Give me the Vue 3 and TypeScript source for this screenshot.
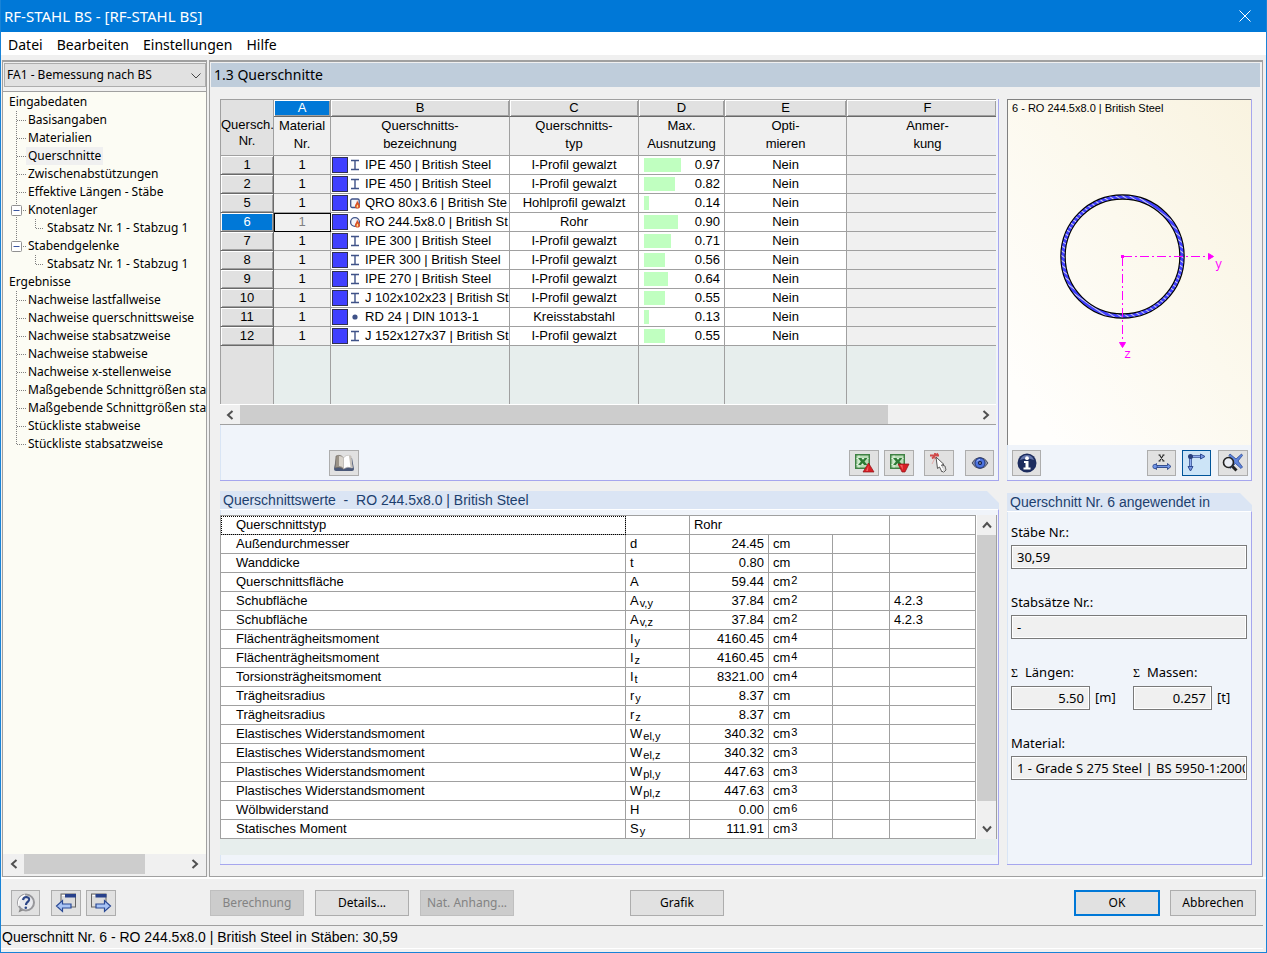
<script setup lang="ts">
import { ref } from 'vue'

interface TreeNode {
  label: string
  depth: 0 | 1 | 2
  box?: boolean
  last?: boolean
  trunk?: boolean
}

interface Section {
  nr: number
  name: string
  shape: 'i' | 'dot' | 'square' | 'ring'
  type: string
  ratio: number
}

interface Property {
  label: string
  symbol: string
  sub?: string
  value: string
  unit: string
  power?: string
  note?: string
}

const menus = ['Datei', 'Bearbeiten', 'Einstellungen', 'Hilfe']

const tree: TreeNode[] = [
  { label: 'Eingabedaten', depth: 0 },
  { label: 'Basisangaben', depth: 1 },
  { label: 'Materialien', depth: 1 },
  { label: 'Querschnitte', depth: 1 },
  { label: 'Zwischenabstützungen', depth: 1 },
  { label: 'Effektive Längen - Stäbe', depth: 1 },
  { label: 'Knotenlager', depth: 1, box: true },
  { label: 'Stabsatz Nr. 1 - Stabzug 1', depth: 2, trunk: true },
  { label: 'Stabendgelenke', depth: 1, box: true, last: true },
  { label: 'Stabsatz Nr. 1 - Stabzug 1', depth: 2 },
  { label: 'Ergebnisse', depth: 0 },
  { label: 'Nachweise lastfallweise', depth: 1 },
  { label: 'Nachweise querschnittsweise', depth: 1 },
  { label: 'Nachweise stabsatzweise', depth: 1 },
  { label: 'Nachweise stabweise', depth: 1 },
  { label: 'Nachweise x-stellenweise', depth: 1 },
  { label: 'Maßgebende Schnittgrößen sta', depth: 1 },
  { label: 'Maßgebende Schnittgrößen sta', depth: 1 },
  { label: 'Stückliste stabweise', depth: 1 },
  { label: 'Stückliste stabsatzweise', depth: 1, last: true },
]

const columns = [
  { letter: 'A', lines: ['Material', 'Nr.'] },
  { letter: 'B', lines: ['Querschnitts-', 'bezeichnung'] },
  { letter: 'C', lines: ['Querschnitts-', 'typ'] },
  { letter: 'D', lines: ['Max.', 'Ausnutzung'] },
  { letter: 'E', lines: ['Opti-', 'mieren'] },
  { letter: 'F', lines: ['Anmer-', 'kung'] },
]

const sections: Section[] = [
  { nr: 1, name: 'IPE 450 | British Steel', shape: 'i', type: 'I-Profil gewalzt', ratio: 0.97 },
  { nr: 2, name: 'IPE 450 | British Steel', shape: 'i', type: 'I-Profil gewalzt', ratio: 0.82 },
  { nr: 5, name: 'QRO 80x3.6 | British Ste', shape: 'square', type: 'Hohlprofil gewalzt', ratio: 0.14 },
  { nr: 6, name: 'RO 244.5x8.0 | British St', shape: 'ring', type: 'Rohr', ratio: 0.9 },
  { nr: 7, name: 'IPE 300 | British Steel', shape: 'i', type: 'I-Profil gewalzt', ratio: 0.71 },
  { nr: 8, name: 'IPER 300 | British Steel', shape: 'i', type: 'I-Profil gewalzt', ratio: 0.56 },
  { nr: 9, name: 'IPE 270 | British Steel', shape: 'i', type: 'I-Profil gewalzt', ratio: 0.64 },
  { nr: 10, name: 'J 102x102x23 | British St', shape: 'i', type: 'I-Profil gewalzt', ratio: 0.55 },
  { nr: 11, name: 'RD 24 | DIN 1013-1', shape: 'dot', type: 'Kreisstabstahl', ratio: 0.13 },
  { nr: 12, name: 'J 152x127x37 | British St', shape: 'i', type: 'I-Profil gewalzt', ratio: 0.55 },
]

const properties: Property[] = [
  { label: 'Außendurchmesser', symbol: 'd', value: '24.45', unit: 'cm' },
  { label: 'Wanddicke', symbol: 't', value: '0.80', unit: 'cm' },
  { label: 'Querschnittsfläche', symbol: 'A', value: '59.44', unit: 'cm', power: '2' },
  { label: 'Schubfläche', symbol: 'A', sub: 'v,y', value: '37.84', unit: 'cm', power: '2', note: '4.2.3' },
  { label: 'Schubfläche', symbol: 'A', sub: 'v,z', value: '37.84', unit: 'cm', power: '2', note: '4.2.3' },
  { label: 'Flächenträgheitsmoment', symbol: 'I', sub: 'y', value: '4160.45', unit: 'cm', power: '4' },
  { label: 'Flächenträgheitsmoment', symbol: 'I', sub: 'z', value: '4160.45', unit: 'cm', power: '4' },
  { label: 'Torsionsträgheitsmoment', symbol: 'I', sub: 't', value: '8321.00', unit: 'cm', power: '4' },
  { label: 'Trägheitsradius', symbol: 'r', sub: 'y', value: '8.37', unit: 'cm' },
  { label: 'Trägheitsradius', symbol: 'r', sub: 'z', value: '8.37', unit: 'cm' },
  { label: 'Elastisches Widerstandsmoment', symbol: 'W', sub: 'el,y', value: '340.32', unit: 'cm', power: '3' },
  { label: 'Elastisches Widerstandsmoment', symbol: 'W', sub: 'el,z', value: '340.32', unit: 'cm', power: '3' },
  { label: 'Plastisches Widerstandsmoment', symbol: 'W', sub: 'pl,y', value: '447.63', unit: 'cm', power: '3' },
  { label: 'Plastisches Widerstandsmoment', symbol: 'W', sub: 'pl,z', value: '447.63', unit: 'cm', power: '3' },
  { label: 'Wölbwiderstand', symbol: 'H', value: '0.00', unit: 'cm', power: '6' },
  { label: 'Statisches Moment', symbol: 'S', sub: 'y', value: '111.91', unit: 'cm', power: '3' },
]

const activeNode = ref(3)
const activeRow = ref(6)
const showAxes = ref(true)

const barWidth = (ratio: number): string => `${Math.round(ratio * 38)}px`
</script>

<template>
  <div class="window">
    <header class="titlebar">
      <h1>RF-STAHL BS - [RF-STAHL BS]</h1>
      <button type="button" class="close" aria-label="Schließen">
        <svg width="12" height="12" viewBox="0 0 12 12"><path d="M.5.5l11 11M11.5.5l-11 11" stroke="#fff" fill="none" /></svg>
      </button>
    </header>

    <nav class="menubar">
      <button v-for="m in menus" :key="m" type="button">{{ m }}</button>
    </nav>

    <div class="workspace">
      <aside class="sidebar">
        <div class="combo">
          <select aria-label="Bemessungsfall">
            <option>FA1 - Bemessung nach BS</option>
          </select>
          <svg width="10" height="6" viewBox="0 0 10 6"><path d="M.5.5L5 5L9.500.5" stroke="#444" fill="none" /></svg>
        </div>
        <ul class="tree">
          <li v-for="(n, i) in tree" :key="i">
            <svg v-if="n.depth === 1" class="branch" width="24" height="18" viewBox="0 0 24 18">
              <path :d="n.last ? 'M12.500 0V10' : 'M12.500 0V18'" />
              <path d="M13 9.500H22" />
              <g v-if="n.box">
                <rect x="7.500" y="4.500" width="10" height="10" rx="1" class="box" />
                <path d="M9.500 9.500H15.500" class="minus" />
              </g>
            </svg>
            <svg v-else-if="n.depth === 2" class="branch" width="43" height="18" viewBox="0 0 43 18">
              <path v-if="n.trunk" d="M12.500 0V18" />
              <path d="M31.500 0V10" />
              <path d="M32 9.500H40" />
            </svg>
            <a
              href="#"
              :class="{ root: n.depth === 0, active: i === activeNode }"
              @click.prevent="activeNode = i"
            >{{ n.label }}</a>
          </li>
        </ul>
        <div class="hscroll tree-scroll">
          <button type="button" aria-label="Nach links"><svg width="8" height="10" viewBox="0 0 8 10"><path d="M6.500 1L2 5L6.500 9" /></svg></button>
          <div class="track"><div class="thumb"></div></div>
          <button type="button" aria-label="Nach rechts"><svg width="8" height="10" viewBox="0 0 8 10"><path d="M1.500 1L6 5L1.500 9" /></svg></button>
        </div>
      </aside>

      <main class="main">
        <h2 class="page-title">1.3 Querschnitte</h2>
        <div class="content">
          <div class="left-col">
            <section class="card upper">
              <div class="grid-wrap">
                <table class="grid">
                  <colgroup>
                    <col class="c-nr" /><col class="c-a" /><col class="c-b" /><col class="c-c" /><col class="c-d" /><col class="c-e" /><col />
                  </colgroup>
                  <thead>
                    <tr class="letters">
                      <th rowspan="2" class="corner">Quersch.<br />Nr.</th>
                      <th v-for="c in columns" :key="c.letter" :class="{ on: c.letter === 'A' }">{{ c.letter }}</th>
                    </tr>
                    <tr class="labels">
                      <th v-for="c in columns" :key="c.letter">{{ c.lines[0] }}<br />{{ c.lines[1] }}</th>
                    </tr>
                  </thead>
                  <tbody>
                    <tr v-for="s in sections" :key="s.nr" :class="{ selected: s.nr === activeRow }" @click="activeRow = s.nr">
                      <th scope="row">{{ s.nr }}</th>
                      <td class="material">1</td>
                      <td>
                        <div class="name">
                          <span class="swatch"></span>
                          <svg width="12" height="14" viewBox="0 0 12 14">
                            <path v-if="s.shape === 'i'" d="M2 2.500H10M2 11.500H10M6 3V11" fill="none" stroke="#3f5288" stroke-width="1.400" />
                            <circle v-else-if="s.shape === 'dot'" cx="6" cy="7" r="2.600" fill="#3f5288" />
                            <g v-else>
                              <rect v-if="s.shape === 'square'" x="1.700" y="3" width="8.500" height="8.500" rx="1.500" fill="#f4f6fb" stroke="#3f5288" stroke-width="1.300" />
                              <circle v-else cx="6" cy="7" r="4.400" fill="#f4f6fb" stroke="#3f5288" stroke-width="1.300" />
                              <path d="M8 4C9 7 11.500 8 11 11C10.500 13 6.500 13 6 11C5.500 8.500 8 7.500 8 4Z" fill="#d9542b" />
                              <path d="M8.500 8.500C9.500 10 9.500 11.500 8.300 11.700C7 11.500 7.500 10 8.500 8.500Z" fill="#ffe08a" />
                            </g>
                          </svg>
                          <span>{{ s.name }}</span>
                        </div>
                      </td>
                      <td class="mid">{{ s.type }}</td>
                      <td>
                        <div class="ratio">
                          <span class="bar" :style="{ width: barWidth(s.ratio) }"></span>
                          <span>{{ s.ratio.toFixed(2) }}</span>
                        </div>
                      </td>
                      <td class="mid">Nein</td>
                      <td class="remark"></td>
                    </tr>
                    <tr class="filler"><th></th><td v-for="c in columns" :key="c.letter"></td></tr>
                  </tbody>
                </table>
                <div class="hscroll grid-scroll">
                  <button type="button" aria-label="Nach links"><svg width="8" height="10" viewBox="0 0 8 10"><path d="M6.500 1L2 5L6.500 9" /></svg></button>
                  <div class="track"><div class="thumb"></div></div>
                  <button type="button" aria-label="Nach rechts"><svg width="8" height="10" viewBox="0 0 8 10"><path d="M1.500 1L6 5L1.500 9" /></svg></button>
                </div>
              </div>
              <div class="toolbar grid-tools">
                <button type="button" class="icon" aria-label="Bibliothek">
                  <svg width="22" height="20" viewBox="0 0 22 20">
                    <path d="M3 6L1 16Q1 18 3 18H19Q21 18 21 16L19 5Z" fill="#4a5878" />
                    <path d="M3 3Q8 1 10.500 5V16Q7 13 2 15Z" fill="#9b9388" stroke="#6d665f" stroke-width=".6" />
                    <path d="M6 3Q9 3 10.500 5V15Q8.500 13 6 13Z" fill="#d9d4cc" />
                    <path d="M10.500 5Q13 1 18 3L19.500 15Q14 13 10.500 16Z" fill="#fff" stroke="#b9b4ae" stroke-width=".6" />
                    <path d="M16 3Q17 2.500 18 3L19.500 15L17.500 14Z" fill="#c6c1ba" />
                  </svg>
                </button>
                <button type="button" class="icon push" aria-label="Excel-Export">
                  <svg width="22" height="22" viewBox="0 0 22 22">
                    <rect x="2" y="2" width="15" height="15" fill="#3f8244" />
                    <rect x="3.500" y="3.500" width="12" height="12" fill="#b9dcb6" />
                    <path d="M3.500 6.500H15.500M3.500 12.500H15.500M6 3.500V15.500" stroke="#e6f5e4" fill="none" />
                    <path d="M5 6H8.500L10 8L11.500 6H14.500L11.500 9.500L14.500 13H11L9.500 11L8 13H5L8 9.500Z" fill="#2d7b35" />
                    <path d="M15.500 11L21 20H10Z" fill="#d91f26" stroke="#8e1217" stroke-width=".7" />
                    <path d="M15.500 13.500L15 19H13Z" fill="#f06060" />
                  </svg>
                </button>
                <button type="button" class="icon" aria-label="Excel-Import">
                  <svg width="22" height="22" viewBox="0 0 22 22">
                    <rect x="2" y="2" width="15" height="15" fill="#3f8244" />
                    <rect x="3.500" y="3.500" width="12" height="12" fill="#b9dcb6" />
                    <path d="M3.500 6.500H15.500M3.500 12.500H15.500M6 3.500V15.500" stroke="#e6f5e4" fill="none" />
                    <path d="M5 6H8.500L10 8L11.500 6H14.500L11.500 9.500L14.500 13H11L9.500 11L8 13H5L8 9.500Z" fill="#2d7b35" />
                    <path d="M10 12H21L17 20H14Z" fill="#d91f26" stroke="#8e1217" stroke-width=".7" />
                    <path d="M12 13H14.500L15 18Z" fill="#f06060" />
                  </svg>
                </button>
                <button type="button" class="icon pick" aria-label="Auswählen">
                  <svg width="22" height="22" viewBox="0 0 22 22">
                    <path d="M2 3.500H11M7 1V7M4 6.500L10 1.500" stroke="#d04a4a" stroke-width="1.800" fill="none" />
                    <path d="M4 12L8 4" stroke="#e5aaaa" fill="none" />
                    <path d="M8 5L16 12.500L13.500 13L16.500 18L14 20L11.500 15L9.500 16.500Z" fill="#fff" stroke="#555" />
                    <path d="M14 13L17 14L18 18L15.500 20.500" fill="#ddd" stroke="#666" />
                  </svg>
                </button>
                <button type="button" class="icon view" aria-label="Ansicht">
                  <svg width="20" height="20" viewBox="0 0 20 20">
                    <path d="M2 10Q5 4.500 10 4.500T18 10Q15 15.500 10 15.500T2 10Z" fill="#8f95a8" stroke="#4b5064" />
                    <circle cx="10" cy="10" r="5" fill="#4d74e0" stroke="#23397f" />
                    <circle cx="10" cy="10" r="2" fill="#101b45" />
                    <path d="M7 8.500Q8 6.500 10 6.500" stroke="#b6c9ff" fill="none" />
                    <circle cx="10" cy="10" r=".7" fill="#fff" />
                  </svg>
                </button>
              </div>
            </section>

            <section class="lower">
              <h3 class="card-title">Querschnittswerte&nbsp; -&nbsp; RO 244.5x8.0 | British Steel</h3>
              <div class="card props-card">
                <div class="props-wrap">
                  <table class="props">
                    <colgroup>
                      <col /><col class="p-sym" /><col class="p-val" /><col class="p-unit" /><col class="p-x" /><col class="p-note" />
                    </colgroup>
                    <tbody>
                      <tr>
                        <th scope="row" class="focus">Querschnittstyp</th>
                        <td></td>
                        <td colspan="3">Rohr</td>
                        <td></td>
                      </tr>
                      <tr v-for="(p, i) in properties" :key="i">
                        <th scope="row">{{ p.label }}</th>
                        <td>{{ p.symbol }}<sub v-if="p.sub">{{ p.sub }}</sub></td>
                        <td class="num">{{ p.value }}</td>
                        <td>{{ p.unit }}<sup v-if="p.power">{{ p.power }}</sup></td>
                        <td></td>
                        <td>{{ p.note }}</td>
                      </tr>
                    </tbody>
                  </table>
                  <div class="vscroll">
                    <button type="button" aria-label="Nach oben"><svg width="10" height="8" viewBox="0 0 10 8"><path d="M1 6.500L5 2L9 6.500" /></svg></button>
                    <div class="vthumb"></div>
                    <button type="button" class="down" aria-label="Nach unten"><svg width="10" height="8" viewBox="0 0 10 8"><path d="M1 1.500L5 6L9 1.500" /></svg></button>
                  </div>
                </div>
                <div class="props-rest"></div>
              </div>
            </section>
          </div>

          <div class="right-col">
            <section class="card upper">
              <div class="canvas">
                <p>6 - RO 244.5x8.0 | British Steel</p>
                <svg class="drawing" width="242" height="325" viewBox="1008 120 242 325">
                  <defs>
                    <pattern id="hatch" width="4" height="4" patternUnits="userSpaceOnUse" patternTransform="rotate(35)">
                      <rect width="4" height="4" fill="#4040ff" />
                      <rect width="4" height="1" fill="#d0d0ee" />
                    </pattern>
                  </defs>
                  <circle cx="1122.500" cy="256.500" r="59.500" fill="none" stroke="#000" stroke-width="5.500" />
                  <circle cx="1122.500" cy="256.500" r="59.500" fill="none" stroke="url(#hatch)" stroke-width="3.200" />
                  <g v-if="showAxes" stroke="#ff00ff" fill="none">
                    <path d="M1123 256.500H1208" stroke-dasharray="9 3 2 3" />
                    <path d="M1122.500 257V343" stroke-dasharray="9 3 2 3" />
                    <path d="M1208.500 253.500L1213.500 256.500L1208.500 259.500Z" fill="#ff00ff" />
                    <path d="M1119.500 342.500L1122.500 347.500L1125.500 342.500Z" fill="#ff00ff" />
                    <rect x="1121.500" y="255.500" width="2" height="2" fill="#ff00ff" />
                  </g>
                  <g v-if="showAxes" class="axis">
                    <text x="1215" y="268">y</text>
                    <text x="1124" y="358">z</text>
                  </g>
                </svg>
              </div>
              <div class="toolbar view-tools">
                <button type="button" class="icon narrow" aria-label="Info">
                  <svg width="22" height="22" viewBox="0 0 22 22">
                    <circle cx="11" cy="11" r="9.500" fill="#1c2c5e" />
                    <path d="M4 8Q6 3 11 3T18 8Q11 5 4 8Z" fill="#6476ac" />
                    <circle cx="11" cy="6.200" r="1.900" fill="#fff" />
                    <path d="M8 9H12.500V15.500H14.500V17.500H7.500V15.500H9.500V11H8Z" fill="#fff" />
                  </svg>
                </button>
                <button type="button" class="icon narrow push" aria-label="Bemaßung">
                  <svg width="22" height="22" viewBox="0 0 22 22">
                    <path d="M8.500 3L12.500 9M12.500 3L8.500 9M7.500 3H9.500M11.500 3H13.500M7.500 9H9.500M11.500 9H13.500" stroke="#222" stroke-width="1.100" fill="none" />
                    <path d="M2 14.500L5.500 11.500V13.500H16.500V11.500L20 14.500L16.500 17.500V15.500H5.500V17.500Z" fill="#7397e8" stroke="#2a4486" stroke-width=".9" />
                    <circle cx="4" cy="14.500" r="2.200" fill="#6f93e6" stroke="#2a4486" stroke-width=".7" />
                  </svg>
                </button>
                <button type="button" class="icon narrow axes" :class="{ pressed: showAxes }" aria-label="Achsen" @click="showAxes = !showAxes">
                  <svg width="22" height="22" viewBox="0 0 22 22">
                    <path d="M4 4.500H15M4.500 5V16" stroke="#2f4c94" stroke-width="2.600" fill="none" />
                    <path d="M4 4.500H15M4.500 5V16" stroke="#90acef" fill="none" />
                    <path d="M14.500 2L19 4.500L14.500 7Z" fill="#7797e2" stroke="#2f4c94" />
                    <path d="M2 14.500H7L4.500 19Z" fill="#7797e2" stroke="#2f4c94" />
                    <circle cx="4.500" cy="4.500" r="2.500" fill="#283f7d" />
                  </svg>
                </button>
                <button type="button" class="icon zoom" aria-label="Zoom zurücksetzen">
                  <svg width="22" height="22" viewBox="0 0 22 22">
                    <path d="M8 2L14 7L19.500 2L20.500 3.500L16 9L20.500 15L19 16.500L13.500 11.500L8 16.500L11.500 9L7 3.500Z" fill="#5e84dd" stroke="#2b4a95" stroke-width=".8" />
                    <circle cx="6.500" cy="10.500" r="5" fill="#eef2fb" fill-opacity=".75" stroke="#222" stroke-width="1.600" />
                    <path d="M10.500 14.500L14.500 18.500" stroke="#222" stroke-width="3" />
                  </svg>
                </button>
              </div>
            </section>

            <section class="lower">
              <h3 class="card-title">Querschnitt Nr. 6 angewendet in</h3>
              <form class="card usage" @submit.prevent>
                <div class="field">
                  <label for="members">Stäbe Nr.:</label>
                  <input id="members" type="text" value="30,59" readonly />
                </div>
                <div class="field">
                  <label for="sets">Stabsätze Nr.:</label>
                  <input id="sets" type="text" value="-" readonly />
                </div>
                <div class="pair">
                  <div class="field">
                    <label for="lengths"><span class="sigma">Σ</span>Längen:</label>
                    <div class="measure"><input id="lengths" type="text" value="5.50" readonly /><span>[m]</span></div>
                  </div>
                  <div class="field">
                    <label for="masses"><span class="sigma">Σ</span>Massen:</label>
                    <div class="measure"><input id="masses" type="text" value="0.257" readonly /><span>[t]</span></div>
                  </div>
                </div>
                <div class="field">
                  <label for="material">Material:</label>
                  <input id="material" type="text" value="1 - Grade S 275 Steel | BS 5950-1:2000" readonly />
                </div>
              </form>
            </section>
          </div>
        </div>
      </main>
    </div>

    <footer class="actions">
      <div class="nav-icons">
        <button type="button" class="icon narrow help" aria-label="Hilfe">
          <svg width="22" height="22" viewBox="0 0 22 22">
            <path d="M5 16L3.500 20.500L9 18Z" fill="#888" />
            <circle cx="11" cy="10.500" r="8" fill="#e9eaee" stroke="#97979b" stroke-width="2" />
            <path d="M4 14Q2 6 10 3" stroke="#fff" stroke-width="1.500" fill="none" />
            <path d="M8 8Q8.500 5 11.500 5Q14.500 5.500 14 8Q13.500 9.500 12 10.500Q11 11.500 11 13" stroke="#2c4687" stroke-width="2.200" fill="none" />
            <circle cx="10.800" cy="15.800" r="1.300" fill="#2c4687" />
          </svg>
        </button>
        <button type="button" class="icon" aria-label="Vorherige Maske">
          <svg width="22" height="22" viewBox="0 0 22 22">
            <rect x="6" y="2" width="14.500" height="13" fill="#dcdcdc" stroke="#666" />
            <rect x="10" y="2" width="11" height="3.500" fill="#27408b" />
            <path d="M7 3.500H10" stroke="#fff" />
            <path d="M1.500 14L7.500 8.500V12H16V16H7.500V19.500Z" fill="#a9c4f5" stroke="#2b4a95" stroke-width="1.200" />
          </svg>
        </button>
        <button type="button" class="icon" aria-label="Nächste Maske">
          <svg width="22" height="22" viewBox="0 0 22 22">
            <rect x="1.500" y="2" width="14.500" height="13" fill="#dcdcdc" stroke="#666" />
            <rect x="5.500" y="2" width="11" height="3.500" fill="#27408b" />
            <path d="M2.500 3.500H5" stroke="#fff" />
            <path d="M20.500 14L14.500 8.500V12H6V16H14.500V19.500Z" fill="#a9c4f5" stroke="#2b4a95" stroke-width="1.200" />
          </svg>
        </button>
      </div>
      <div class="commands">
        <button type="button" class="push-btn" disabled>Berechnung</button>
        <button type="button" class="push-btn">Details...</button>
        <button type="button" class="push-btn" disabled>Nat. Anhang...</button>
      </div>
      <button type="button" class="push-btn graphic">Grafik</button>
      <div class="confirm">
        <button type="button" class="push-btn primary">OK</button>
        <button type="button" class="push-btn">Abbrechen</button>
      </div>
    </footer>

    <div class="status" role="status">Querschnitt Nr. 6 - RO 244.5x8.0 | British Steel in Stäben: 30,59</div>
  </div>
</template>

<style>
body {
  margin: 0;
}
</style>

<style scoped>
.window,
.window * {
  box-sizing: border-box;
}

.window {
  display: flex;
  flex-direction: column;
  min-height: 100vh;
  background: #f0f0f0;
  border: 1px solid #1883d7;
  border-top: 0;
  color: #000;
  font: 12px/16px "Noto Sans", "Open Sans", sans-serif;
}

button,
select,
input {
  margin: 0;
  color: inherit;
  font: inherit;
}

svg {
  display: block;
  flex: none;
}

h1,
h2,
h3,
p,
ul {
  margin: 0;
  padding: 0;
  font-weight: 400;
}

.titlebar {
  display: flex;
  align-items: center;
  justify-content: space-between;
  height: 32px;
  padding: 0 15px 0 3px;
  background: #0078d7;
  color: #fff;
}

.titlebar h1 {
  font-size: 15px;
  line-height: 32px;
}

.close {
  display: flex;
  padding: 0;
  border: 0;
  background: none;
}

.menubar {
  display: flex;
  gap: 14px;
  height: 23px;
  padding: 0 7px;
  margin-bottom: 5px;
  background: #fff;
}

.menubar button {
  padding: 0;
  border: 0;
  background: none;
  font-size: 14px;
  line-height: 26px;
}

.workspace {
  display: flex;
  flex: 1;
  gap: 2px;
  padding: 0 3px 0 1px;
  border-bottom: 2px solid #fff;
}

.sidebar {
  display: flex;
  flex-direction: column;
  flex: none;
  width: 205px;
  border: 1px solid #a0a0a0;
  border-top-width: 2px;
  background: #fcfcf4;
}

.combo {
  position: relative;
  padding: 1px 0 4px 1px;
  background: #f0f0f0;
  border-bottom: 1px solid #a0a0a0;
}

.combo select {
  display: block;
  width: 100%;
  height: 24px;
  padding: 0 20px 0 2px;
  border: 1px solid #adadad;
  border-radius: 0;
  background: #e1e1e1;
  appearance: none;
}

.combo svg {
  position: absolute;
  top: 11px;
  right: 5px;
  pointer-events: none;
}

.tree {
  flex: 1;
  padding: 1px 0 0 1px;
  overflow: hidden;
  list-style: none;
}

.tree li {
  display: flex;
  height: 18px;
  white-space: nowrap;
}

.branch path {
  fill: none;
  stroke: #808080;
  stroke-dasharray: 1 1;
}

.branch .box {
  fill: #fff;
  stroke: #919191;
}

.branch .minus {
  stroke: #3a55a0;
  stroke-dasharray: none;
}

.tree a {
  margin-left: -2px;
  padding: 0 0 0 2px;
  color: inherit;
  line-height: 18px;
  text-decoration: none;
}

.tree a.root {
  margin-left: 3px;
}

.tree a.active {
  padding-right: 2px;
  background: #f0f0f0;
}

.hscroll {
  display: flex;
  height: 19px;
  background: #f0f0f0;
}

.hscroll button,
.vscroll button {
  display: flex;
  align-items: center;
  justify-content: center;
  flex: none;
  width: 20px;
  padding: 0;
  border: 0;
  background: none;
}

.hscroll path,
.vscroll path {
  fill: none;
  stroke: #505050;
  stroke-width: 2;
}

.track {
  display: flex;
  flex: 1;
}

.thumb {
  background: #cdcdcd;
}

.tree-scroll {
  height: 22px;
  padding: 0 1px 2px;
}

.tree-scroll .thumb {
  width: 75%;
}

.grid-scroll {
  height: 21px;
  border-top: 1px solid #fff;
  border-bottom: 1px solid #a0a0a0;
}

.grid-scroll .thumb {
  width: 88%;
}

.main {
  display: flex;
  flex-direction: column;
  flex: 1;
  min-width: 0;
  border: 1px solid #a0a0a0;
  border-top-width: 2px;
}

.page-title {
  margin: 1px 2px 0 1px;
  padding-left: 3px;
  background: #bfcddb;
  font-size: 14px;
  line-height: 24px;
}

.content {
  display: flex;
  flex: 1;
  gap: 8px;
  padding: 12px 10px 11px;
}

.left-col {
  display: flex;
  flex-direction: column;
  flex: 1;
  gap: 10px;
  min-width: 0;
  font-family: "Liberation Sans", Arial, sans-serif;
}

.right-col {
  display: flex;
  flex-direction: column;
  flex: none;
  gap: 12px;
  width: 245px;
}

.card {
  background: #f0f4fa;
  border-right: 1px solid #a6a6ee;
  border-bottom: 1px solid #a6a6ee;
  box-shadow: inset 1px 0 #d9e5f5;
}

.upper {
  height: 382px;
}

.lower {
  display: flex;
  flex-direction: column;
  flex: 1;
}

.card-title {
  height: 18px;
  padding-left: 3px;
  background: #dbe5f4;
  clip-path: polygon(0 0, calc(100% - 12px) 0, 100% 12px, 100% 100%, 0 100%);
  color: #1d3f6e;
  font: 14px/18px "Liberation Sans", Arial, sans-serif;
}

.grid-wrap {
  margin-right: 2px;
}

.grid,
.props {
  width: 100%;
  border-collapse: separate;
  border-spacing: 0;
  table-layout: fixed;
  font-size: 13px;
  line-height: 18px;
}

.grid {
  border-top: 1px solid #a0a0a0;
}

.c-nr { width: 54px; }
.c-a { width: 57px; }
.c-b { width: 179px; }
.c-c { width: 129px; }
.c-d { width: 86px; }
.c-e { width: 122px; }

.grid th,
.grid td {
  height: 19px;
  padding: 0;
  border-right: 1px solid #a0a0a0;
  border-bottom: 1px solid #a0a0a0;
  background: #fff;
  font-weight: 400;
  white-space: nowrap;
}

.grid tr > :last-child {
  border-right: 0;
}

.grid thead tr > :last-child {
  padding-left: 12px;
}

.grid .letters th {
  height: 17px;
  background: #e1e1e1;
  border-bottom-color: #696969;
  box-shadow: inset 1px 1px #fff, inset -1px -1px #a0a0a0;
  line-height: 16px;
}

.grid .letters .on {
  background: #0078d7;
  color: #fff;
}

.grid .letters .corner {
  border-left: 1px solid #a0a0a0;
  border-bottom-color: #a0a0a0;
  box-shadow: none;
  padding-top: 10px;
}

.grid .labels th {
  height: 39px;
  background: #f0f0f0;
  line-height: 18px;
  vertical-align: top;
}

.grid tbody th {
  border-left: 1px solid #a0a0a0;
  border-right-color: #696969;
  border-bottom-color: #696969;
  background: #e1e1e1;
  box-shadow: inset 1px 1px #fff, inset -1px -1px #a0a0a0;
  vertical-align: top;
}

.grid .selected th {
  background: #0078d7;
  color: #fff;
}

.grid .material {
  background: #f0f0f0;
  text-align: center;
}

.grid .selected .material {
  outline: 1px solid #000;
  outline-offset: -1px;
  color: #808080;
}

.grid .mid {
  text-align: center;
}

.grid .remark {
  background: #f0f0f0;
}

.grid .filler th,
.grid .filler td {
  height: 58px;
  border-bottom: 0;
  background: #e7eeed;
}

.grid .filler th {
  border-right-color: #a0a0a0;
  background: #e1e1e1;
  box-shadow: none;
}

.name {
  display: flex;
  align-items: center;
  padding-left: 1px;
  overflow: hidden;
}

.name svg {
  margin: 0 4px 0 1px;
}

.swatch {
  flex: none;
  width: 16px;
  height: 16px;
  border: 1px solid #303050;
  background: #4040ff;
}

.ratio {
  display: flex;
  align-items: center;
  justify-content: space-between;
  padding: 0 4px 0 5px;
}

.bar {
  height: 14px;
  background: #c0ffc0;
}

.toolbar {
  display: flex;
  gap: 5px;
}

.icon {
  display: flex;
  align-items: center;
  justify-content: center;
  width: 30px;
  height: 26px;
  padding: 0;
  border: 1px solid #adadad;
  background: #e1e1e1;
}

.narrow {
  width: 29px;
}

.push {
  margin-left: auto;
}

.grid-tools {
  padding: 25px 4px 0 109px;
}

.grid-tools .pick {
  margin-left: 5px;
}

.grid-tools .view {
  width: 29px;
  margin-left: 6px;
}

.view-tools {
  gap: 6px;
  padding: 5px 3px 0 5px;
}

.view-tools .zoom {
  margin-left: 1px;
}

.icon.pressed {
  border-color: #005499;
  background: #cce4f7;
}

.props-card {
  flex: 1;
  padding: 5px 0 9px;
  border-top: 1px solid #fff;
}

.props-wrap {
  display: flex;
  margin-right: 1px;
}

.props {
  flex: 1;
  border-top: 1px solid #a0a0a0;
  border-left: 1px solid #a0a0a0;
}

.p-sym { width: 64px; }
.p-val { width: 79px; }
.p-unit { width: 64px; }
.p-x { width: 57px; }
.p-note { width: 86px; }

.props th,
.props td {
  height: 19px;
  padding: 0 4px;
  border-right: 1px solid #a0a0a0;
  border-bottom: 1px solid #a0a0a0;
  background: #fff;
  font-weight: 400;
  line-height: 17px;
  text-align: left;
  vertical-align: top;
  white-space: nowrap;
}

.props th {
  padding-left: 15px;
}

.props .focus {
  outline: 1px dotted #000;
  outline-offset: -1px;
}

.props .num {
  text-align: right;
}

.props sub,
.props sup {
  margin-left: 1px;
  font-size: 11px;
  line-height: 0;
}

.props sub {
  vertical-align: -2px;
}

.props sup {
  vertical-align: 2px;
}

.vscroll {
  display: flex;
  flex-direction: column;
  width: 21px;
  border-left: 1px solid #fff;
  border-right: 1px solid #a0a0a0;
  background: #f0f0f0;
}

.vscroll button {
  width: 100%;
  height: 20px;
}

.vthumb {
  height: 82%;
  background: #cdcdcd;
}

.vscroll .down {
  margin-top: auto;
}

.props-rest {
  height: 16px;
  margin-right: 1px;
  background: #e7eeed;
}

.canvas {
  height: 346px;
  border: 1px solid #808080;
  border-right: 0;
  border-bottom: 0;
  background: linear-gradient(to bottom left, #f9f3e0, #fcf9ee 45%, #fffefc 90%);
}

.canvas p {
  padding-left: 4px;
  font: 11px/16px "Liberation Sans", Arial, sans-serif;
}

.drawing {
  margin-top: 4px;
}

.axis text {
  fill: #ff00ff;
  font: 12px "Liberation Mono", monospace;
}

.usage {
  display: flex;
  flex: 1;
  flex-direction: column;
  gap: 25px;
  padding: 12px 4px 0;
  border-top: 1px solid #fff;
  font-size: 13px;
}

.field {
  display: flex;
  flex-direction: column;
  gap: 5px;
}

.usage input {
  width: 100%;
  height: 24px;
  padding: 0 0 0 5px;
  border: 1px solid #7a7a7a;
  outline: 1px solid #fff;
  outline-offset: -2px;
  background: #f0f0f0;
}

.pair {
  display: flex;
  gap: 12px;
}

.pair .field {
  width: 110px;
}

.measure {
  display: flex;
  gap: 5px;
}

.usage .measure input {
  width: 79px;
  padding-right: 5px;
  text-align: right;
}

.measure span {
  line-height: 22px;
}

.sigma {
  display: inline-block;
  width: 14px;
  font-family: "Liberation Serif", serif;
  font-size: 12px;
}

.actions {
  display: flex;
  flex: none;
  padding: 11px 10px 9px;
}

.nav-icons {
  display: flex;
  gap: 5px;
  width: 199px;
}

.help {
  margin-right: 6px;
}

.commands {
  display: flex;
  gap: 11px;
}

.push-btn {
  width: 94px;
  height: 26px;
  padding: 0;
  border: 1px solid #adadad;
  background: #e1e1e1;
}

.push-btn:disabled {
  border-color: #bfbfbf;
  background: #cccccc;
  color: #838383;
}

.graphic {
  margin-left: 116px;
}

.confirm {
  display: flex;
  gap: 10px;
  margin-left: auto;
}

.confirm .push-btn {
  width: 86px;
}

.confirm .primary {
  border: 2px solid #0078d7;
}

.status {
  flex: none;
  height: 24px;
  margin: 0 3px 3px 0;
  padding-left: 1px;
  border-top: 1px solid #a0a0a0;
  border-bottom: 1px solid #fff;
  font: 14px/22px "Liberation Sans", Arial, sans-serif;
}
</style>
